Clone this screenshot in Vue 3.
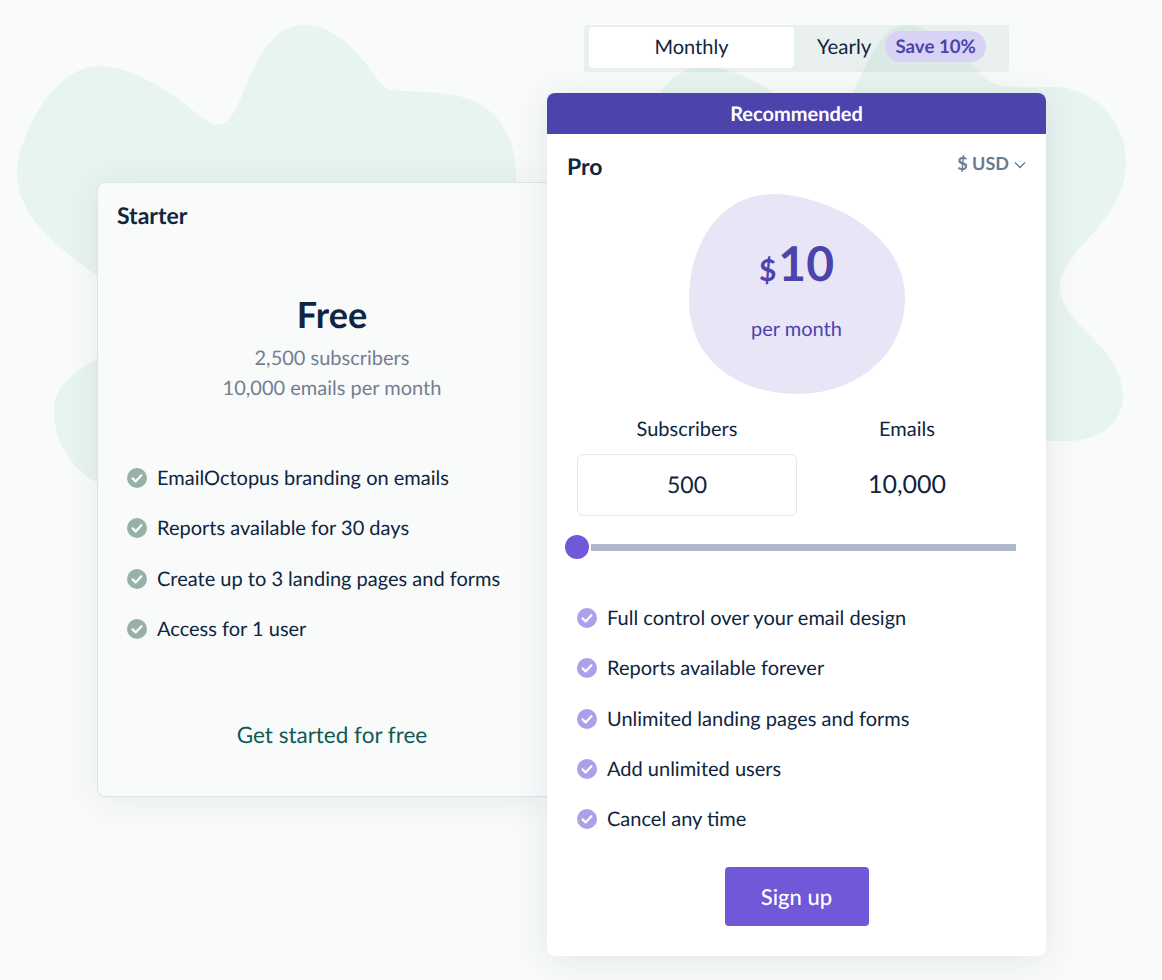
<template>
  <div class="page">
    <!-- decorative blobs behind the cards -->
    <svg class="blobs" width="1162" height="980" viewBox="0 0 1162 980" aria-hidden="true">
      <path d="M96 66C130 66 165 88 190 108C202 118 214 130 226 122C246 108 254 26 304 25C350 26 372 78 386 88C396 94 440 88 472 100C504 114 516 145 516 175L516 300L96 482C70 468 54 440 54 411C54 385 75 372 96 359L120 320L96 275C60 250 17 215 17 175C17 140 50 70 96 66Z" />
      <path d="M660 93C672 76 684 68 702 67C722 66 750 76 773 93L853 93C864 70 880 25 905 25C935 25 962 55 985 78C1000 92 1030 86 1060 87C1100 92 1126 125 1126 163C1126 222 1060 250 1060 287C1060 325 1123 345 1123 397C1123 425 1095 442 1067 441L1000 441L660 200Z" />
    </svg>

    <div class="plans">
      <section class="card starter">
        <h2 class="plan-name">Starter</h2>
        <div class="free-price">
          <div class="free">Free</div>
          <p>2,500 subscribers</p>
          <p>10,000 emails per month</p>
        </div>
        <ul class="features grey-list">
          <li v-for="item in starterFeatures" :key="item">
            <svg class="check" viewBox="0 0 20 20"><circle cx="10" cy="10" r="10" /><path d="M5.6 10.4l3 3 5.8-6.2" /></svg>
            {{ item }}
          </li>
        </ul>
        <a class="free-link" href="#">Get started for free</a>
      </section>

      <div class="pro-col">
        <div class="toggle">
          <button class="toggle-opt" :class="{ active: period === 'monthly' }" @click="period = 'monthly'">Monthly</button>
          <button class="toggle-opt yearly" @click="period = 'yearly'">
            Yearly <span class="save">Save 10%</span>
          </button>
        </div>

        <section class="card pro">
          <div class="banner">Recommended</div>
          <div class="pro-body">
            <div class="pro-head">
              <h2 class="plan-name">Pro</h2>
              <div class="currency">
                $ USD
                <svg width="12" height="8" viewBox="0 0 12 8"><path d="M1 1.5l5 5 5-5" /></svg>
              </div>
            </div>

            <div class="price-blob">
              <svg class="price-shape" width="216" height="200" viewBox="0 0 216 200">
                <path d="M0 106C0 46 34 0 84 0C132 0 216 36 216 104C216 164 164 200 108 200C54 200 0 170 0 106Z" />
              </svg>
              <div class="price"><span class="dollar">$</span>10</div>
              <div class="per">per month</div>
            </div>

            <div class="calc">
              <div class="calc-col">
                <label for="subs">Subscribers</label>
                <input id="subs" v-model="subscribers" class="subs-input" type="text" />
              </div>
              <div class="calc-col">
                <label>Emails</label>
                <div class="emails">10,000</div>
              </div>
            </div>

            <div class="slider">
              <span class="thumb"></span>
              <span class="track"></span>
            </div>

            <ul class="features purple-list">
              <li v-for="item in proFeatures" :key="item">
                <svg class="check" viewBox="0 0 20 20"><circle cx="10" cy="10" r="10" /><path d="M5.6 10.4l3 3 5.8-6.2" /></svg>
                {{ item }}
              </li>
            </ul>

            <button class="signup">Sign up</button>
          </div>
        </section>
      </div>
    </div>
  </div>
</template>

<script setup>
import { ref } from 'vue'

const period = ref('monthly')
const subscribers = ref('500')

const starterFeatures = [
  'EmailOctopus branding on emails',
  'Reports available for 30 days',
  'Create up to 3 landing pages and forms',
  'Access for 1 user'
]

const proFeatures = [
  'Full control over your email design',
  'Reports available forever',
  'Unlimited landing pages and forms',
  'Add unlimited users',
  'Cancel any time'
]
</script>

<style>
body {
  background: #f9fbfa;
}
</style>

<style scoped>
.page {
  position: relative;
  width: 1162px;
  height: 980px;
  overflow: hidden;
  background: #f9fbfa;
  font-family: Lato, "Open Sans", sans-serif;
  text-rendering: geometricPrecision;
  color: #0f2540;
}

.blobs {
  position: absolute;
  top: 0;
  left: 0;
}

.blobs path {
  fill: #e8f4f1;
}

.plans {
  position: relative;
  display: flex;
  align-items: flex-start;
  padding: 25px 0 0 97px;
}

.card {
  box-sizing: border-box;
  border-radius: 8px;
}

.plan-name {
  margin: -1px 0 1px;
  font-size: 23px;
  line-height: 28px;
  font-weight: 700;
  color: #0f2540;
}

/* Starter */
.starter {
  width: 451px;
  height: 615px;
  margin-top: 157px;
  margin-right: -1px;
  padding: 19px 1px 0 19px;
  background: #f9fbfb;
  border: 1px solid #d8e8e5;
  box-shadow: 0 4px 36px rgba(30, 50, 70, 0.08);
  border-right: 0;
  border-radius: 8px 0 0 8px;
}

.free-price {
  margin-top: 61px;
  text-align: center;
  color: #747e91;
  font-size: 20px;
  line-height: 30px;
}

.free {
  font-size: 36px;
  line-height: 48px;
  font-weight: 700;
  color: #0f2540;
  margin-bottom: 5px;
}

.free-price p {
  margin: 0;
}

.features {
  list-style: none;
  margin: 0;
  padding: 0 0 0 10px;
  font-size: 20px;
  line-height: 26px;
}

.features li {
  display: flex;
  align-items: center;
  gap: 10px;
  height: 26px;
  margin-bottom: 24.3px;
}

.starter .features {
  margin-top: 62px;
}

.check {
  flex: none;
  width: 20px;
  height: 20px;
}

.check path {
  fill: none;
  stroke: #fff;
  stroke-width: 2.2;
  stroke-linecap: round;
  stroke-linejoin: round;
}

.grey-list .check circle {
  fill: #97b0aa;
}

.purple-list .check circle {
  fill: #ad9fe8;
}

.free-link {
  display: block;
  margin-top: 79px;
  text-align: center;
  font-size: 22.5px;
  line-height: 28px;
  color: #0f5a56;
  text-decoration: none;
}

/* Billing toggle */
.pro-col {
  width: 499px;
}

.toggle {
  display: flex;
  align-items: center;
  box-sizing: border-box;
  width: 425px;
  height: 47px;
  margin: 0 0 21px 37px;
  padding: 2px 5px 4px;
  border-radius: 3px;
  background: rgba(0, 70, 60, 0.06);
}

.toggle-opt {
  border: 0;
  background: none;
  padding: 0 0 2px;
  font-family: inherit;
  font-size: 20px;
  color: #0f2540;
  text-rendering: inherit;
  cursor: pointer;
}

.toggle-opt.active {
  width: 205px;
  height: 41px;
  border-radius: 4px;
  background: #fff;
}

.yearly {
  display: flex;
  align-items: center;
  gap: 14px;
  margin-left: 23px;
  font-size: 20.5px;
}

.save {
  padding: 0 10px;
  height: 31px;
  line-height: 30px;
  border-radius: 16px;
  background: #d8d2f4;
  color: #4d43ad;
  font-size: 18.7px;
  font-weight: 700;
}

/* Pro card */
.pro {
  position: relative;
  height: 863px;
  background: #fff;
  box-shadow: 0 4px 36px rgba(30, 50, 70, 0.1);
  overflow: hidden;
}

.banner {
  height: 41px;
  line-height: 42px;
  text-align: center;
  font-size: 20px;
  font-weight: 700;
  color: #fff;
  background: #4d43ad;
}

.pro-body {
  padding: 19px 20px 0;
}

.pro-head {
  display: flex;
  justify-content: space-between;
  align-items: flex-start;
}

.currency {
  display: flex;
  align-items: center;
  gap: 5px;
  margin-top: -1px;
  font-size: 18px;
  line-height: 22px;
  font-weight: 700;
  color: #6b7a8f;
}

.currency svg {
  margin-top: 3px;
}

.currency path {
  fill: none;
  stroke: #6b7a8f;
  stroke-width: 1.4;
}

.price-blob {
  position: relative;
  width: 216px;
  height: 200px;
  margin: 13px auto 0;
  padding-top: 40px;
  box-sizing: border-box;
  text-align: center;
}

.price-shape {
  position: absolute;
  top: 0;
  left: 0;
}

.price-shape path {
  fill: #e8e6f6;
}

.price {
  position: relative;
  font-size: 48px;
  line-height: 60px;
  font-weight: 700;
  color: #4d43ad;
}

.dollar {
  font-size: 30px;
  margin-right: 2px;
}

.per {
  position: relative;
  margin-top: 16px;
  font-size: 20px;
  line-height: 26px;
  color: #4d43ad;
}

.calc {
  display: grid;
  grid-template-columns: 220px 220px;
  margin: 22px 0 0 10px;
  text-align: center;
}

.calc-col label {
  display: block;
  font-size: 20px;
  line-height: 26px;
  margin-bottom: 12px;
}

.subs-input {
  box-sizing: border-box;
  display: block;
  width: 220px;
  height: 62px;
  padding: 0 0 3px;
  border: 1px solid #e3e5f0;
  border-radius: 6px;
  background: #fff;
  text-align: center;
  font-family: inherit;
  font-size: 23px;
  text-rendering: inherit;
  color: #0f2540;
  outline: none;
}

.emails {
  font-size: 25px;
  line-height: 60px;
  height: 62px;
}

.slider {
  display: flex;
  align-items: center;
  gap: 2px;
  margin: 19px 10px 0 -2px;
}

.thumb {
  flex: none;
  width: 24px;
  height: 24px;
  border-radius: 50%;
  background: #7058d9;
  box-shadow: 0 0 0 1px #fff;
}

.track {
  flex: 1;
  height: 7px;
  background: #afb8cd;
}

.purple-list {
  margin-top: 46px;
}

.signup {
  display: block;
  width: 144px;
  height: 59px;
  margin: 35px auto 0;
  border: 0;
  border-radius: 4px;
  background: #7058d9;
  color: #fff;
  font-family: inherit;
  font-size: 22px;
  font-weight: 500;
  text-rendering: inherit;
  cursor: pointer;
}
</style>
